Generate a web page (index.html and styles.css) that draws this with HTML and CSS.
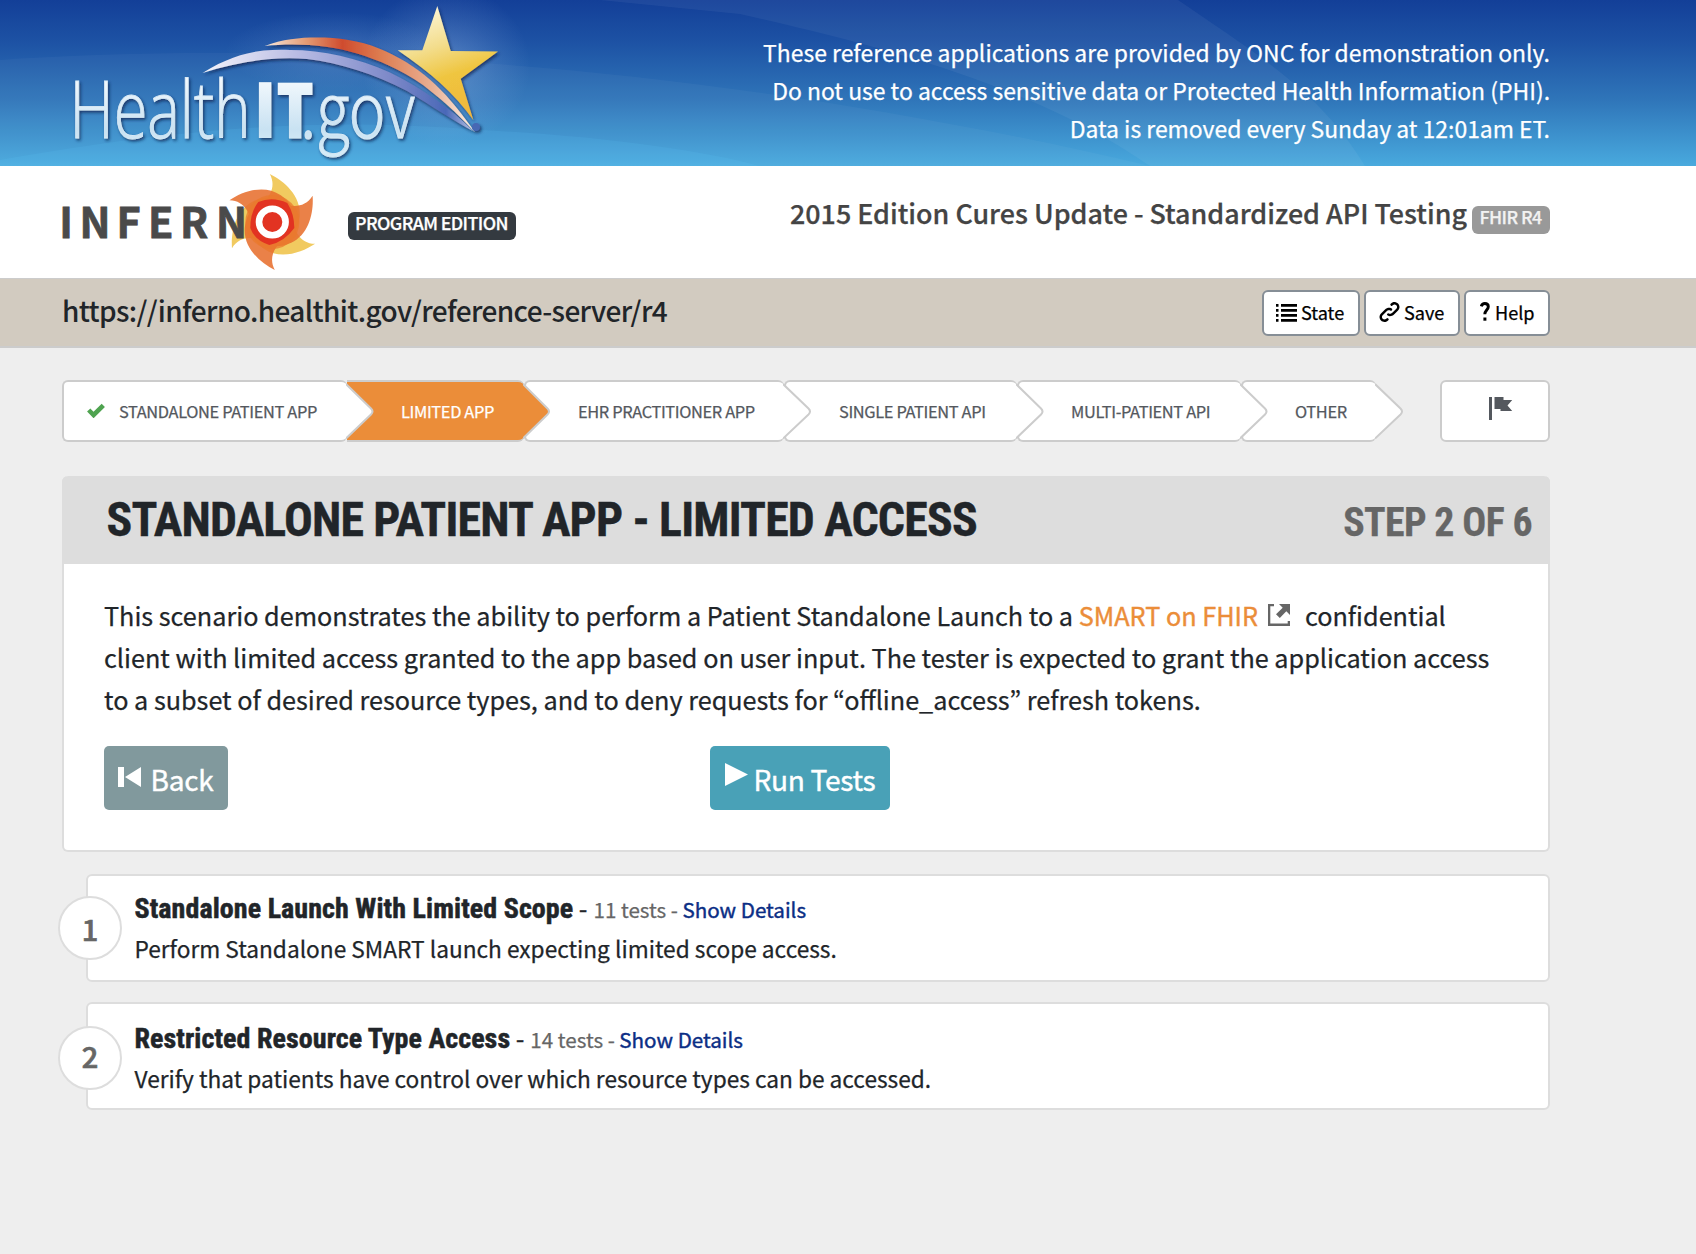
FILE: index.html
```html
<!DOCTYPE html>
<html lang="en">
<head>
<meta charset="utf-8">
<title>Inferno Program Edition</title>
<link rel="stylesheet" href="styles.css">
</head>
<body>
<header class="banner">
  <svg class="banner-waves" viewBox="0 0 1696 166" preserveAspectRatio="none" aria-hidden="true">
    <path d="M520 0H1178C1250 50 1320 90 1365 166H1150C1040 90 900 50 740 14L600 0Z" fill="#fff" opacity=".05"/>
    <path d="M0 60C300 40 700 60 1150 166H0Z" fill="#fff" opacity=".035"/>
    <path d="M0 160C200 125 330 118 480 130C600 136 700 150 760 166H0Z" fill="#6cf" opacity=".12"/>
  </svg>
  <div class="container banner-row">
    <svg class="healthit" width="480" height="166" viewBox="62 0 480 166" role="img">
      <defs>
        <linearGradient id="letters" gradientUnits="userSpaceOnUse" x1="0" y1="80" x2="0" y2="150"><stop offset="0" stop-color="#f2f8fd"/><stop offset=".7" stop-color="#c9e2f2"/><stop offset="1" stop-color="#d5ebf7"/></linearGradient>
        <linearGradient id="star" x1=".3" y1="0" x2=".6" y2="1"><stop offset="0" stop-color="#fdf6d8"/><stop offset=".35" stop-color="#f3dd8c"/><stop offset=".62" stop-color="#efc53f"/><stop offset="1" stop-color="#f0b63c"/></linearGradient>
        <linearGradient id="red"><stop offset="0" stop-color="#f8e8dc"/><stop offset=".2" stop-color="#e49a72"/><stop offset=".37" stop-color="#cf4c2e"/><stop offset=".55" stop-color="#dd7c50"/><stop offset=".8" stop-color="#e9b094"/><stop offset="1" stop-color="#fff1e6"/></linearGradient>
        <linearGradient id="blue"><stop offset="0" stop-color="#f4f4fb"/><stop offset=".35" stop-color="#b9bce4"/><stop offset=".7" stop-color="#7c88c8"/><stop offset=".9" stop-color="#4a68b8"/><stop offset="1" stop-color="#b5bfe2"/></linearGradient>
        <radialGradient id="glow"><stop offset="0" stop-color="#a9c4ee" stop-opacity=".36"/><stop offset=".6" stop-color="#a9c4ee" stop-opacity=".13"/><stop offset="1" stop-color="#a9c4ee" stop-opacity="0"/></radialGradient>
        <filter id="shade" x="-10%" y="-10%" width="120%" height="130%"><feDropShadow dx="1.5" dy="2" stdDeviation="1.6" flood-color="#0b2350" flood-opacity=".75"/></filter>
      </defs>
      <ellipse cx="446" cy="66" rx="84" ry="80" fill="url(#glow)"/>
      <ellipse cx="335" cy="52" rx="110" ry="40" fill="url(#glow)" opacity=".6"/>
      <g filter="url(#shade)">
        <path d="M202.500 73C236 52 262 49 290 50C323 50 357 58 390 72.500C425 90 450 108 473 131C455 122 432 106 407 91C375 74 340 63 307 59C270 56 235 63 202.500 73Z" fill="url(#blue)"/>
        <path d="M264.700 46C285 38 305 37 325 37.500C345 38 368 43 385 51C425 69 450 96 474.700 132C455 111 440 98 423 85C400 69 378 60 357 53.500C330 45 295 42.500 264.700 46Z" fill="url(#red)"/>
        <path d="M437.300 6L450.700 51L498 51.500L460.700 78.700L473.300 120C455 94 430 72 397.700 50.300H422.300Z" fill="url(#star)"/>
        <circle cx="476" cy="127" r="4" fill="#4767b4"/>
      </g>
      <g filter="url(#shade)" fill="url(#letters)" stroke="#d8eaf6" stroke-width=".9" class="healthit-text">
        <text x="69.500" y="137.500" textLength="181" lengthAdjust="spacingAndGlyphs">Health</text>
        <text x="254" y="137.500" class="healthit-bold" textLength="60" lengthAdjust="spacingAndGlyphs">IT</text>
        <text x="300.500" y="137.500" class="healthit-gov" textLength="115" lengthAdjust="spacingAndGlyphs">.gov</text>
      </g>
    </svg>
    <p class="notice">These reference applications are provided by ONC for demonstration only.<br>Do not use to access sensitive data or Protected Health Information (PHI).<br>Data is removed every Sunday at 12:01am ET.</p>
  </div>
</header>

<div class="brand">
  <div class="container brand-row">
    <div class="brand-left">
      <svg class="inferno" width="264" height="104" viewBox="54 170 264 104" role="img">
        <defs>
          <path id="petal" d="M-2.500-48C12-41 29-26 27.500-6C26 10 16 20 4 24L-16-14C-4-22 5-34-2.500-48Z"/>
        </defs>
        <g transform="translate(272.300 222)">
          <g fill="#f0c653" opacity=".92">
            <use href="#petal"/><use href="#petal" transform="rotate(120)"/><use href="#petal" transform="rotate(240)"/>
          </g>
          <g fill="#e8702f" opacity=".88">
            <use href="#petal" transform="rotate(60)"/><use href="#petal" transform="rotate(180)"/><use href="#petal" transform="rotate(300)"/>
          </g>
          <circle r="27" fill="#ea7a2c" opacity=".75"/>
          <path d="M-14-20Q0-26 15-19Q22-8 22 6Q12 20-3 23Q-18 18-22 6Q-22-10-14-20Z" fill="#e23322"/>
          <circle r="13.300" fill="#e23322" stroke="#fff" stroke-width="6.600"/>
        </g>
        <text class="inferno-text" y="237.700" x="59.300 79.500 116.500 148 180 216">INFERN</text>
      </svg>
      <span class="badge badge-dark">PROGRAM EDITION</span>
    </div>
    <div class="brand-right">
      <span class="suite">2015 Edition Cures Update - Standardized API Testing</span>
      <span class="badge badge-gray">FHIR R4</span>
    </div>
  </div>
</div>

<div class="server">
  <div class="container server-row">
    <div class="url">https://inferno.healthit.gov/reference-server/r4</div>
    <div class="tools">
      <button class="tool tool-state"><svg width="21" height="18" viewBox="0 0 21 18"><path d="M0 0h2.500v2.700H0zM5 0h16v2.700H5zM0 5h2.500v2.700H0zM5 5h16v2.700H5zM0 10h2.500v2.700H0zM5 10h16v2.700H5zM0 15h2.500v2.700H0zM5 15h16v2.700H5z"/></svg><span>State</span></button>
      <button class="tool tool-save"><svg width="21" height="20" viewBox="0 0 8 8"><path d="M5.880.03c-.18.01-.36.03-.53.09-.27.1-.53.25-.75.47a.5.5 0 1 0 .69.69c.11-.11.24-.17.38-.22.35-.12.78-.07 1.060.22.39.39.39 1.040 0 1.440l-1.500 1.500c-.44.44-.8.48-1.060.47-.26-.01-.41-.13-.41-.13a.5.5 0 1 0-.5.88s.34.22.84.25c.5.03 1.200-.16 1.810-.78l1.500-1.500c.78-.78.78-2.040 0-2.810-.28-.28-.61-.45-.97-.53-.18-.04-.38-.04-.56-.03zm-2 2.310c-.5-.02-1.190.15-1.780.75l-1.500 1.500c-.78.78-.78 2.040 0 2.810.56.56 1.360.72 2.060.47.27-.1.53-.25.75-.47a.5.5 0 1 0-.69-.69c-.11.11-.24.17-.38.22-.35.12-.78.07-1.060-.22-.39-.39-.39-1.040 0-1.440l1.500-1.500c.4-.4.75-.45 1.030-.44.28.01.47.09.47.09a.5.5 0 1 0 .44-.88s-.34-.2-.84-.22z"/></svg><span>Save</span></button>
      <button class="tool tool-help"><svg width="10" height="19" viewBox="0 0 10 19"><path d="M1.300 4.300C1.800 2.300 3 1.500 4.800 1.500C7 1.500 8.300 2.700 8.300 4.700C8.300 7.800 4.800 8.300 4.800 12.300" fill="none" stroke="#000" stroke-width="2.900"/><path d="M3.400 15.500h3v3.200h-3z"/></svg><span>Help</span></button>
    </div>
  </div>
</div>

<main class="container">
  <div class="nav-row">
    <nav class="steps">
      <div class="step step-first"><svg class="check" width="18" height="15" viewBox="0 0 18 15"><path d="M1.700 7L6.600 12L16.300 2.300" fill="none" stroke="#4fa350" stroke-width="4.600"/></svg><span>STANDALONE PATIENT APP</span><svg class="arrow" width="31" height="62" viewBox="0 0 31 62"><path d="M0 4L25 28.500Q28 31.500 25 34.500L0 58.500"/></svg></div>
      <div class="step step-active"><span>LIMITED APP</span><svg class="arrow" width="31" height="62" viewBox="0 0 31 62"><path d="M0 4L24.500 28.500Q27.500 31.500 24.500 34.500L0 58.500"/></svg></div>
      <div class="step step-ehr"><span>EHR PRACTITIONER APP</span><svg class="arrow" width="31" height="62" viewBox="0 0 31 62"><path d="M0 4L25.500 28.500Q28.500 31.500 25.500 34.500L0 58.500"/></svg></div>
      <div class="step step-single"><span>SINGLE PATIENT API</span><svg class="arrow" width="31" height="62" viewBox="0 0 31 62"><path d="M0 4L25 28.500Q28 31.500 25 34.500L0 58.500"/></svg></div>
      <div class="step step-multi"><span>MULTI-PATIENT API</span><svg class="arrow" width="31" height="62" viewBox="0 0 31 62"><path d="M0 4L25 28.500Q28 31.500 25 34.500L0 58.500"/></svg></div>
      <div class="step step-other"><span>OTHER</span><svg class="arrow" width="31" height="62" viewBox="0 0 31 62"><path d="M0 4L25.500 28.500Q28.500 31.500 25.500 34.500L0 58.500"/></svg></div>
    </nav>
    <div class="report"><svg width="24" height="24" viewBox="0 0 24 24"><path d="M0 0h3v23H0zM5.500 0H14.500V3H23.200L18.500 8.500L23.200 14H11.500V12H5.500Z" fill="#54585e"/></svg></div>
  </div>

  <section class="card">
    <div class="card-head">
      <h1>STANDALONE PATIENT APP - LIMITED ACCESS</h1>
      <span class="step-count">STEP 2 OF 6</span>
    </div>
    <div class="card-body">
      <p class="intro">This scenario demonstrates the ability to perform a Patient Standalone Launch to a <a href="#">SMART on FHIR</a><svg class="ext" width="22" height="22" viewBox="0 0 22 22"><path d="M0 0H6V2.300H2.300V19.500H19.700V17H22V22H0ZM11 0H22V11L18.300 7.300L11.800 14L8 10.200L14.700 3.700Z" fill="#666"/></svg>confidential<br>client with limited access granted to the app based on user input. The tester is expected to grant the application access<br>to a subset of desired resource types, and to deny requests for “offline_access” refresh tokens.</p>
      <div class="actions">
        <button class="action back"><svg width="23" height="20" viewBox="0 0 23 20"><path d="M0 0h6v20H0zM23 0V20L7 10Z"/></svg><span>Back</span></button>
        <button class="action run"><svg width="23" height="23" viewBox="0 0 23 23"><path d="M0 0L23 11.500L0 23Z"/></svg><span>Run Tests</span></button>
      </div>
    </div>
  </section>

  <section class="test">
    <div class="num num-1">1</div>
    <div class="test-head"><h2>Standalone Launch With Limited Scope</h2><span class="dash">-</span><span class="count">11 tests -</span><a class="details" href="#">Show Details</a></div>
    <p>Perform Standalone SMART launch expecting limited scope access.</p>
  </section>
  <section class="test test-2">
    <div class="num">2</div>
    <div class="test-head"><h2>Restricted Resource Type Access</h2><span class="dash">-</span><span class="count">14 tests -</span><a class="details" href="#">Show Details</a></div>
    <p>Verify that patients have control over which resource types can be accessed.</p>
  </section>
</main>
</body>
</html>
```
FILE: styles.css
```css
* { box-sizing: border-box; }

body {
  margin: 0;
  min-height: 1254px;
  background: #eee;
  color: #212529;
  font-family: "Noto Sans CJK KR", "Noto Sans", sans-serif;
  -webkit-text-stroke-width: .25px;
}

h1, h2, p { margin: 0; }
a { text-decoration: none; }
button { font-family: inherit; white-space: nowrap; -webkit-text-stroke-width: .25px; }

.container {
  width: 1488px;
  margin-left: 62px;
}

.banner {
  position: relative;
  height: 166px;
  background: linear-gradient(#133f98 0, #1d52a4 25%, #2f75b9 60%, #46a4da 96%, #4aaadd 100%);
}
.banner-waves { position: absolute; inset: 0; width: 100%; height: 100%; }
.banner-row {
  position: relative;
  display: flex;
  justify-content: space-between;
}
.healthit { display: block; }
.healthit-text {
  font-family: "Open Sans", sans-serif;
  font-size: 78.5px;
  font-weight: 300;
}
.healthit-bold { font-weight: 800; stroke: none; }
.healthit-gov { font-family: "Noto Sans CJK KR", sans-serif; font-size: 76px; }
.notice {
  padding-top: 33px;
  color: #fff;
  font-size: 22.93px;
  line-height: 38px;
  text-align: right;
  white-space: nowrap;
}

.brand { height: 112px; background: #fff; }
.brand-row { display: flex; justify-content: space-between; }
.brand-left { display: flex; padding-top: 4px; }
.inferno { display: block; margin-left: -8px; }
.inferno-text {
  font-size: 41.4px;
  font-weight: 700;
  fill: #4a4a4a;
  stroke: #4a4a4a;
  stroke-width: .8px;
}
.brand-right { display: flex; padding-top: 27px; }
.suite {
  color: #444;
  font-size: 26.87px;
  line-height: 40px;
  font-weight: 500;
  white-space: nowrap;
}
.badge {
  height: 28px;
  border-radius: 6px;
  color: #fff;
  font-size: 17.8px;
  font-weight: 500;
  line-height: 20px;
  letter-spacing: -.6px;
  text-indent: -1px;
  text-align: center;
  white-space: nowrap;
}
.badge-dark { width: 168px; margin: 42px 0 0 30px; background: #343a40; }
.badge-gray { width: 78px; margin: 13px 0 0 5px; background: #999; color: #f2f2f2; }

.server {
  height: 70px;
  background: #d2cbc0;
  border-top: 1px solid #ccc;
  border-bottom: 2px solid #ccc;
}
.server-row { display: flex; justify-content: space-between; }
.url {
  padding-top: 10px;
  font-size: 28px;
  letter-spacing: -.62px;
  line-height: 42px;
  font-weight: 500;
  -webkit-text-stroke-width: 0;
}
.tools { display: flex; gap: 4px; padding-top: 11px; }
.tool {
  display: flex;
  height: 46px;
  padding: 0 0 0 12px;
  border: 2px solid #868e96;
  border-radius: 6px;
  background: #fff;
  color: #000;
  font-size: 18.1px;
  line-height: 40px;
}
.tool-state { width: 98px; }
.tool-state svg { margin: 12px 4px 0 0; }
.tool-save { width: 96px; padding-left: 13px; }
.tool-save svg { margin: 10px 4px 0 0; }
.tool-help { width: 86px; padding-left: 14px; }
.tool-help svg { margin: 10px 5px 0 0; }

.nav-row {
  display: flex;
  justify-content: space-between;
  height: 62px;
  margin-top: 32px;
}
.steps { display: flex; }
.step {
  position: relative;
  display: flex;
  height: 62px;
  padding-left: 52px;
  border: 2px solid #ccc;
  border-right: 0;
  border-radius: 6px;
  background: #fff;
  color: #54585e;
  font-size: 16.4px;
  letter-spacing: -.36px;
  line-height: 58px;
  white-space: nowrap;
}
.step-first { width: 285px; padding-left: 23px; z-index: 6; }
.step-active { width: 177px; z-index: 5; background: #eb8d39; color: #fff; border-left: 0; border-radius: 0 6px 6px 0; padding-left: 54px; }
.step-ehr { width: 260px; z-index: 4; }
.step-single { width: 233px; z-index: 3; padding-left: 53px; }
.step-multi { width: 224px; z-index: 2; }
.step-other { width: 135px; z-index: 1; }
.check { margin: 21px 14px 0 0; }
.arrow { position: absolute; top: -2px; right: -30px; fill: #fff; stroke: #ccc; stroke-width: 2; }
.step-active .arrow { fill: #eb8d39; }
.report {
  width: 110px;
  padding: 15px 0 0 47px;
  border: 2px solid #ccc;
  border-radius: 6px;
  background: #fff;
}
.report svg { display: block; }

.card {
  height: 376px;
  margin-top: 34px;
  border: 2px solid #ddd;
  border-top: 0;
  border-radius: 6px;
  background: #fff;
}
.card-head {
  display: flex;
  justify-content: space-between;
  align-items: baseline;
  height: 88px;
  margin: 0 -2px;
  padding: 0 18px 0 44.500px;
  border-radius: 6px 6px 0 0;
  background: #ddd;
  font-family: "Roboto Condensed", Roboto, sans-serif;
  font-stretch: 75%;
  font-weight: 700;
  line-height: 88px;
}
h1 { font-size: 47.8px; font-weight: 700; letter-spacing: -.82px; -webkit-text-stroke-width: .4px; }
.step-count { font-size: 39.8px; letter-spacing: -.65px; color: #666; }
.card-body { padding: 30px 0 0 40px; }
.intro {
  font-size: 25.23px;
  line-height: 42px;
  white-space: nowrap;
}
.intro a { color: #eb8d39; -webkit-text-stroke-width: .4px; }
.ext { margin: 0 15px 0 10px; vertical-align: 0; }
.actions { display: flex; gap: 482px; margin-top: 26px; }
.action {
  display: flex;
  height: 64px;
  padding: 0 0 0 14px;
  border: 0;
  border-radius: 5px;
  color: #fff;
  fill: #fff;
  font-size: 28.1px;
  letter-spacing: -.3px;
  line-height: 65px;
  -webkit-text-stroke-width: .4px;
}
.back { width: 124px; background: #81999d; }
.back svg { margin: 21px 9.500px 0 0; }
.run { width: 180px; background: #49a1b7; padding-left: 14.500px; }
.run svg { margin: 17px 6px 0 0; }

.test {
  position: relative;
  height: 108px;
  margin: 22px 0 0 24px;
  padding: 11px 0 0 46.500px;
  border: 2px solid #ddd;
  border-radius: 6px;
  background: #fff;
}
.test-2 { margin-top: 20px; padding-top: 13px; }
.num {
  position: absolute;
  left: -30px;
  top: 22px;
  width: 64px;
  height: 64px;
  border: 2px solid #ddd;
  border-radius: 50%;
  background: #fff;
  color: #666;
  font-size: 29px;
  font-weight: 500;
  line-height: 55px;
  text-align: center;
  -webkit-text-stroke-width: .7px;
}
.num-1 { top: 20px; line-height: 60px; }
.test-head {
  display: flex;
  align-items: baseline;
  height: 40px;
  line-height: 40px;
  font-size: 20.6px;
  white-space: nowrap;
}
h2 {
  font-family: "Roboto Condensed", Roboto, sans-serif;
  font-stretch: 75%;
  font-size: 28px;
  font-weight: 700;
  letter-spacing: .07px;
  -webkit-text-stroke-width: .5px;
}
.dash { margin: 0 6px 0 5.500px; font-size: 25px; }
.count { color: #666; }
.details { margin-left: 4.500px; color: #0b2e85; -webkit-text-stroke-width: .4px; }
.test p {
  margin-top: 4px;
  font-size: 22.68px;
  line-height: 36px;
  white-space: nowrap;
}
```
